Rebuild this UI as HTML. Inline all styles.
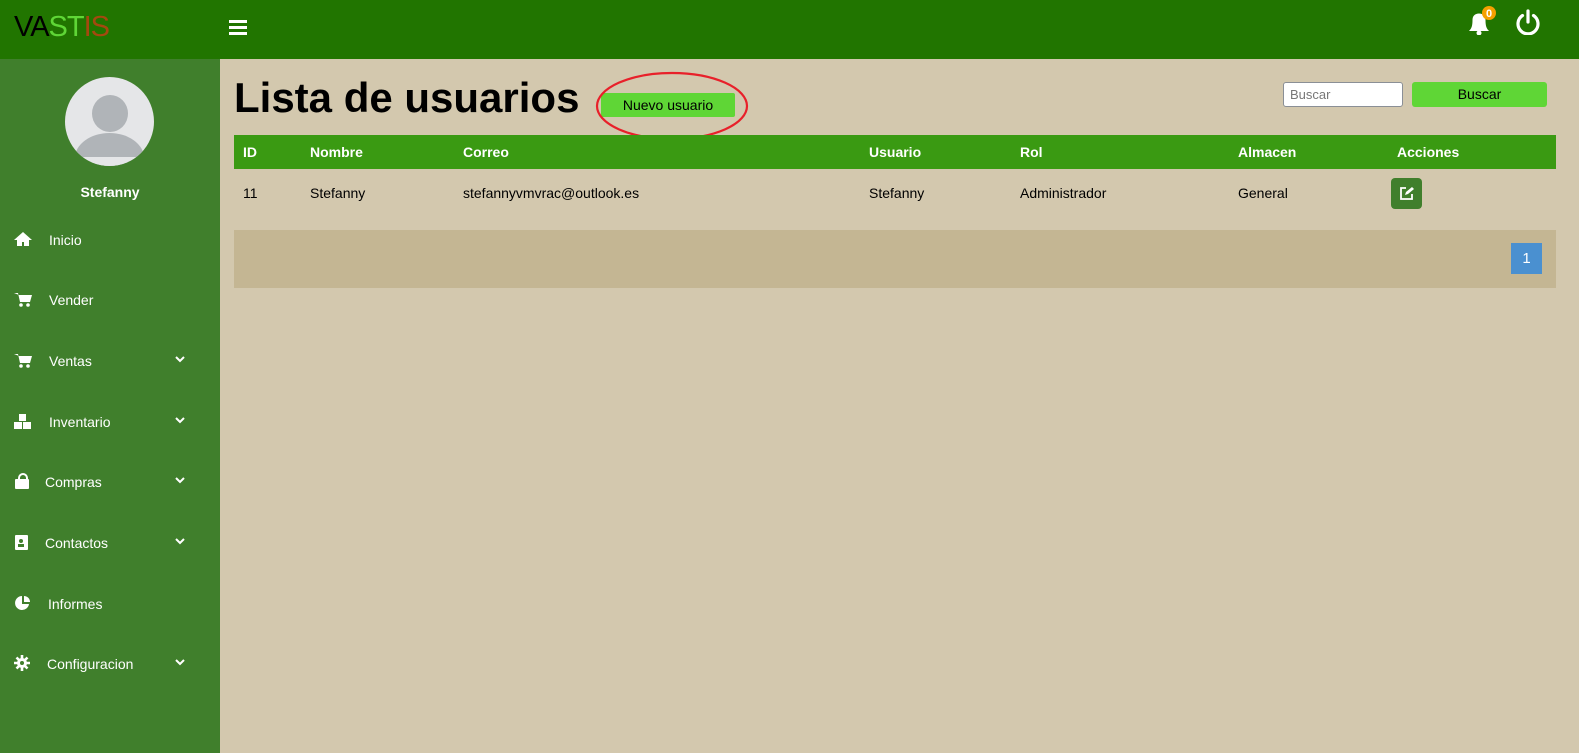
<!DOCTYPE html>
<html><head><meta charset="utf-8"><style>
*{margin:0;padding:0;box-sizing:border-box}
body{width:1579px;height:753px;overflow:hidden;background:#d3c8ae;font-family:"Liberation Sans",Arial,sans-serif;position:relative}
.top{position:absolute;left:0;top:0;width:1579px;height:59px;background:#217500}
.logo{position:absolute;left:14px;top:11px;font-size:29px;letter-spacing:-1px}
.side{position:absolute;left:0;top:59px;width:220px;height:694px;background:#407f2c}
.av{position:absolute;left:65px;top:77px;width:89px;height:89px;border-radius:50%;background:#e5e6e8;overflow:hidden}
.name{position:absolute;left:0;width:220px;top:184px;text-align:center;color:#fff;font-weight:bold;font-size:14px}
.item{position:absolute;left:0;width:220px;color:#fff;font-size:14px;height:20px}
.item svg{position:absolute;left:14px;top:1px}
.item span{position:absolute;top:2px}
.item .ch{position:absolute;left:174px;top:3px}
h1{position:absolute;left:234px;top:74px;font-size:42px;font-weight:bold;color:#000}
.btn{position:absolute;background:#5fd636;border-radius:3px;font-size:14px;text-align:center;color:#000}
table{position:absolute;left:234px;top:135px;width:1322px;border-collapse:collapse;font-size:14px}
th{background:#3a9a12;color:#fff;text-align:left;height:34px;padding:0 9px;font-weight:bold}
td{height:48px;padding:0 9px;color:#000}
</style></head><body>
<div class="top"></div>
<div class="logo"><span style="color:#000">VA</span><span style="color:#5fd636">ST</span><span style="color:#a4490f">IS</span></div>
<svg style="position:absolute;left:229px;top:19px" width="18" height="16"><rect y="1" width="18" height="3" fill="#fff"/><rect y="7" width="18" height="3" fill="#fff"/><rect y="13" width="18" height="3" fill="#fff"/></svg>
<svg style="position:absolute;left:1466px;top:5px" width="32" height="30"><path d="M3 26h20c-2.5-2.5-3.5-5-3.5-11 0-4-2.5-6.5-6.5-6.5s-6.5 2.5-6.5 6.5c0 6-1 8.5-3.5 11z" fill="#fff"/><circle cx="13" cy="28" r="2.5" fill="#fff"/><circle cx="23" cy="8" r="7" fill="#f5a000"/><text x="23" y="12" font-size="11" font-weight="bold" fill="#fff" text-anchor="middle" font-family="Liberation Sans">0</text></svg>
<svg style="position:absolute;left:1515px;top:9px" width="26" height="26"><path d="M7.5 6.5a10 10 0 1 0 11 0" stroke="#fff" stroke-width="3.2" fill="none" stroke-linecap="round"/><path d="M13 2v11" stroke="#fff" stroke-width="3.2" stroke-linecap="round"/></svg>
<div class="side"></div>
<div class="av"><div style="position:absolute;left:27px;top:18px;width:36px;height:37px;border-radius:50%;background:#b0b4b8"></div><div style="position:absolute;left:10px;top:56px;width:69px;height:50px;border-radius:50% 50% 0 0;background:#b0b4b8"></div><div style="position:absolute;left:0;top:80px;width:89px;height:10px;background:#e5e6e8"></div></div>
<div class="name">Stefanny</div>
<div class="item" style="top:230px"><svg width="18" height="16"><path d="M9 1L0 9h3v6h5v-4h2v4h5V9h3z" fill="#fff"/></svg><span style="left:49px">Inicio</span></div>
<div class="item" style="top:290px"><svg width="18" height="16"><path d="M0 2h4l2 9h10l2-7H5z" fill="#fff"/><circle cx="7" cy="14" r="1.8" fill="#fff"/><circle cx="14" cy="14" r="1.8" fill="#fff"/></svg><span style="left:49px">Vender</span></div>
<div class="item" style="top:351px"><svg width="18" height="16"><path d="M0 2h4l2 9h10l2-7H5z" fill="#fff"/><circle cx="7" cy="14" r="1.8" fill="#fff"/><circle cx="14" cy="14" r="1.8" fill="#fff"/></svg><span style="left:49px">Ventas</span><svg class="ch" width="12" height="10"><path d="M2 3l4 4 4-4" stroke="#fff" stroke-width="2" fill="none"/></svg></div>
<div class="item" style="top:412px"><svg width="18" height="16"><rect x="5" y="1" width="7" height="7" fill="#fff"/><rect x="0" y="9" width="8" height="7" fill="#fff"/><rect x="9" y="9" width="8" height="7" fill="#fff"/></svg><span style="left:49px">Inventario</span><svg class="ch" width="12" height="10"><path d="M2 3l4 4 4-4" stroke="#fff" stroke-width="2" fill="none"/></svg></div>
<div class="item" style="top:472px"><svg width="18" height="16"><path d="M5 6V5a4 4 0 0 1 8 0v1" stroke="#fff" stroke-width="2" fill="none"/><rect x="1" y="6" width="14" height="10" rx="1" fill="#fff"/></svg><span style="left:45px">Compras</span><svg class="ch" width="12" height="10"><path d="M2 3l4 4 4-4" stroke="#fff" stroke-width="2" fill="none"/></svg></div>
<div class="item" style="top:533px"><svg width="18" height="16"><rect x="1" y="1" width="13" height="15" rx="1" fill="#fff"/><circle cx="7" cy="7" r="2" fill="#407f2c"/><rect x="4" y="10" width="6" height="3" fill="#407f2c"/></svg><span style="left:45px">Contactos</span><svg class="ch" width="12" height="10"><path d="M2 3l4 4 4-4" stroke="#fff" stroke-width="2" fill="none"/></svg></div>
<div class="item" style="top:594px"><svg width="18" height="16"><path d="M8 1a7 7 0 1 0 7 8H8z" fill="#fff"/><path d="M10 1v6h6a6 6 0 0 0-6-6z" fill="#fff"/></svg><span style="left:48px">Informes</span></div>
<div class="item" style="top:654px"><svg width="18" height="16"><circle cx="8" cy="8" r="5" fill="#fff"/><path d="M8 0v16M0 8h16M2.5 2.5l11 11M13.5 2.5l-11 11" stroke="#fff" stroke-width="2.6"/><circle cx="8" cy="8" r="2" fill="#407f2c"/></svg><span style="left:47px">Configuracion</span><svg class="ch" width="12" height="10"><path d="M2 3l4 4 4-4" stroke="#fff" stroke-width="2" fill="none"/></svg></div>
<h1>Lista de usuarios</h1>
<div class="btn" style="left:601px;top:93px;width:134px;height:24px;line-height:24px;border-radius:2px">Nuevo usuario</div>
<svg style="position:absolute;left:593px;top:70px" width="158" height="72"><ellipse cx="79" cy="36" rx="75" ry="33" stroke="#e8202a" stroke-width="2.2" fill="none"/></svg>
<div style="position:absolute;left:1283px;top:82px;width:120px;height:25px;background:#fff;border:1px solid #8a8f96;border-radius:3px;font-size:13px;color:#777;padding:4px 6px">Buscar</div>
<div class="btn" style="left:1412px;top:82px;width:135px;height:25px;line-height:25px">Buscar</div>
<table>
<tr><th style="width:67px">ID</th><th style="width:153px">Nombre</th><th style="width:406px">Correo</th><th style="width:151px">Usuario</th><th style="width:218px">Rol</th><th style="width:159px">Almacen</th><th>Acciones</th></tr>
<tr><td>11</td><td>Stefanny</td><td>stefannyvmvrac@outlook.es</td><td>Stefanny</td><td>Administrador</td><td>General</td><td><div style="width:31px;height:31px;background:#407f2c;border-radius:4px;position:relative;left:-6px"><svg style="position:absolute;left:8px;top:8px" width="15" height="15"><path d="M7 2H2v11h11V8" stroke="#fff" stroke-width="1.8" fill="none"/><path d="M6 9l1-3 6-5 2 2-6 5z" fill="#fff"/></svg></div></td></tr>
</table>
<div style="position:absolute;left:234px;top:230px;width:1322px;height:58px;background:#c4b693"></div>
<div style="position:absolute;left:1511px;top:243px;width:31px;height:31px;background:#4a90d0;color:#fff;font-size:15px;text-align:center;line-height:31px">1</div>
</body></html>
